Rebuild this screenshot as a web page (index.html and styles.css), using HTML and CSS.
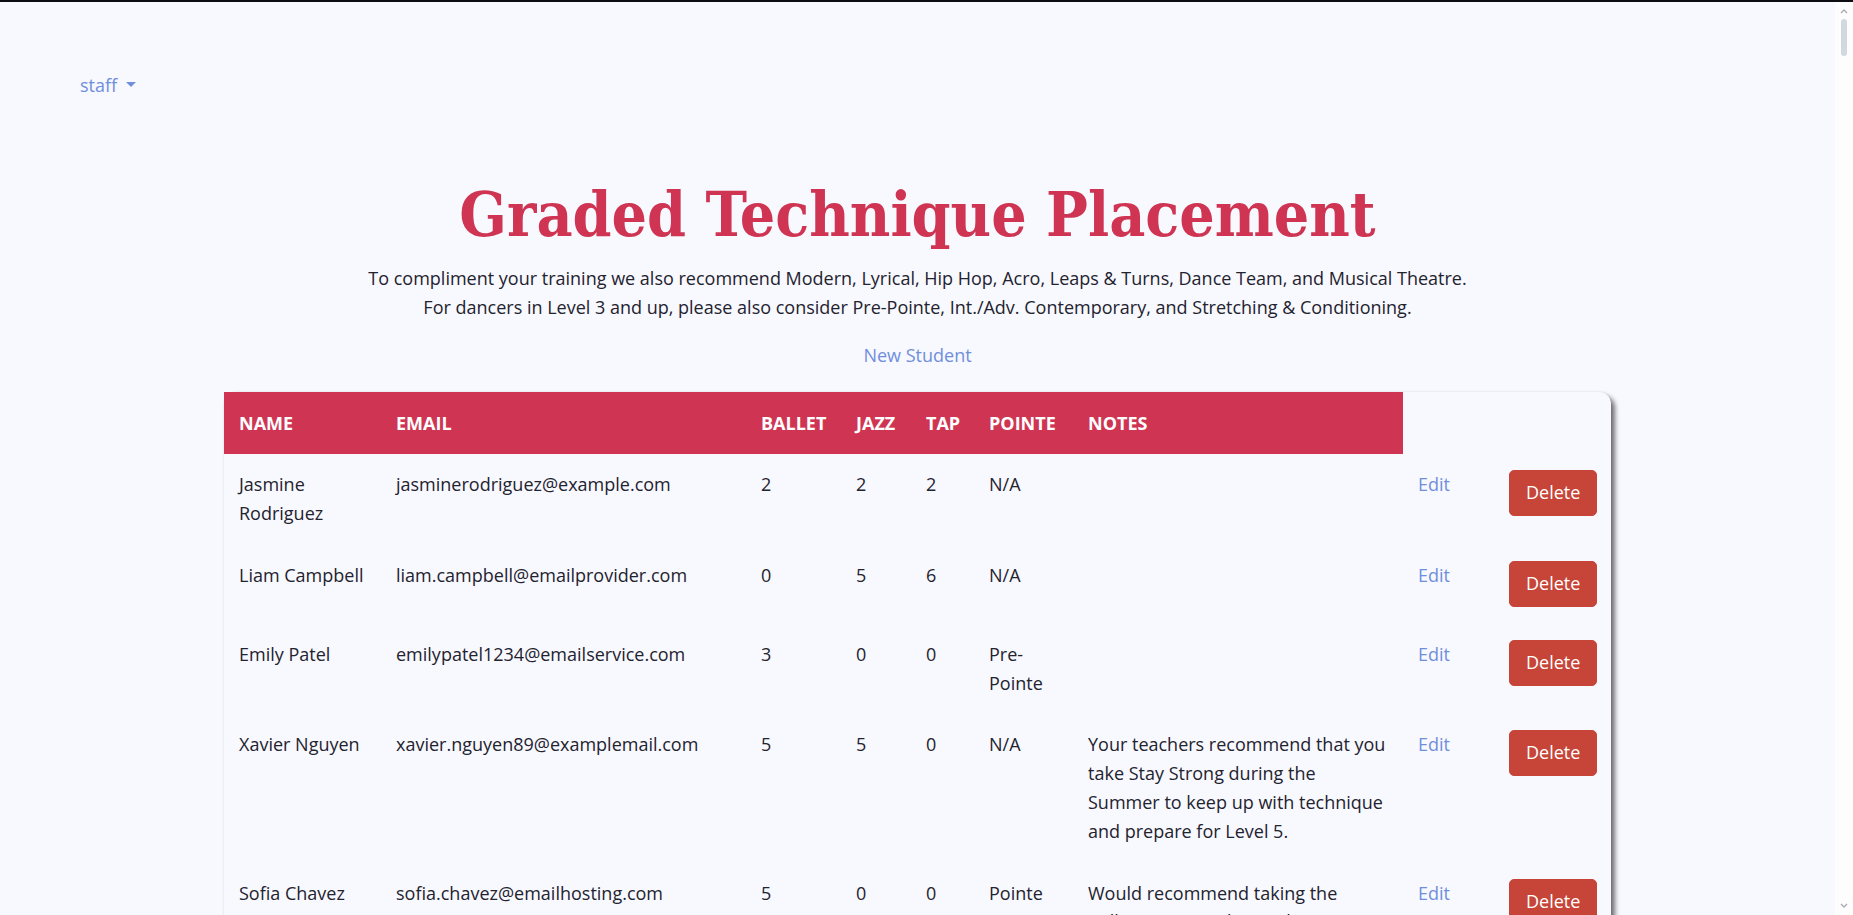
FILE: index.html
```html
<!DOCTYPE html>
<html lang="en">
<head>
<meta charset="utf-8">
<title>Graded Technique Placement</title>
<link rel="stylesheet" href="styles.css">
</head>
<body>
<div class="topline"></div>
<div class="scrollbar" aria-hidden="true">
  <svg class="arrow up" width="8" height="6" viewBox="0 0 8 6"><path d="M1 5 L4 2 L7 5" fill="none" stroke="#a9adb3" stroke-width="1.4"/></svg>
  <div class="thumb"></div>
  <svg class="arrow down" width="8" height="6" viewBox="0 0 8 6"><path d="M1 1 L4 4 L7 1" fill="none" stroke="#a9adb3" stroke-width="1.4"/></svg>
</div>
<nav class="nav">
  <a class="nav-link" href="#">staff <span class="caret"></span></a>
</nav>
<main class="main">
  <h1 class="title">Graded Technique Placement</h1>
  <p class="intro">To compliment your training we also recommend Modern, Lyrical, Hip Hop, Acro, Leaps &amp; Turns, Dance Team, and Musical Theatre.<br>For dancers in Level 3 and up, please also consider Pre-Pointe, Int./Adv. Contemporary, and Stretching &amp; Conditioning.</p>
  <p class="new"><a href="#" class="link">New Student</a></p>
  <table class="students">
    <colgroup>
      <col class="c-name"><col class="c-email"><col class="c-ballet"><col class="c-jazz"><col class="c-tap"><col class="c-pointe"><col class="c-notes"><col class="c-edit"><col class="c-del">
    </colgroup>
    <thead>
      <tr>
        <th class="h">Name</th><th class="h">Email</th><th class="h">Ballet</th><th class="h">Jazz</th><th class="h">Tap</th><th class="h">Pointe</th><th class="h">Notes</th><th class="blank"></th><th class="blank"></th>
      </tr>
    </thead>
    <tbody>
      <tr>
        <td>Jasmine Rodriguez</td><td>jasminerodriguez@example.com</td><td>2</td><td>2</td><td>2</td><td>N/A</td><td></td>
        <td><a href="#" class="link">Edit</a></td><td><button class="del">Delete</button></td>
      </tr>
      <tr>
        <td>Liam Campbell</td><td>liam.campbell@emailprovider.com</td><td>0</td><td>5</td><td>6</td><td>N/A</td><td></td>
        <td><a href="#" class="link">Edit</a></td><td><button class="del">Delete</button></td>
      </tr>
      <tr>
        <td>Emily Patel</td><td>emilypatel1234@emailservice.com</td><td>3</td><td>0</td><td>0</td><td>Pre-Pointe</td><td></td>
        <td><a href="#" class="link">Edit</a></td><td><button class="del">Delete</button></td>
      </tr>
      <tr>
        <td>Xavier Nguyen</td><td>xavier.nguyen89@examplemail.com</td><td>5</td><td>5</td><td>0</td><td>N/A</td><td>Your teachers recommend that you take Stay Strong during the Summer to keep up with technique and prepare for Level 5.</td>
        <td><a href="#" class="link">Edit</a></td><td><button class="del">Delete</button></td>
      </tr>
      <tr>
        <td>Sofia Chavez</td><td>sofia.chavez@emailhosting.com</td><td>5</td><td>0</td><td>0</td><td>Pointe</td><td>Would recommend taking the Ballet Intensive during the Summer.</td>
        <td><a href="#" class="link">Edit</a></td><td><button class="del">Delete</button></td>
      </tr>
      <tr>
        <td>Noah Kim</td><td>noah.kim@example.com</td><td>1</td><td>2</td><td>1</td><td>N/A</td><td></td>
        <td><a href="#" class="link">Edit</a></td><td><button class="del">Delete</button></td>
      </tr>
    </tbody>
  </table>
</main>
</body>
</html>
```
FILE: styles.css
```css
html, body {
  margin: 0;
  padding: 0;
}
body {
  background: #f8f8ff;
  color: #23232e;
  font-family: "Open Sans", "Liberation Sans", sans-serif;
  font-size: 18px;
  line-height: 1.6;
  padding-right: 18px;
}
.topline {
  position: fixed;
  top: 0;
  left: 0;
  right: 0;
  height: 2px;
  background: #0d0d14;
  z-index: 2;
}
.scrollbar {
  position: fixed;
  top: 0;
  right: 0;
  bottom: 0;
  width: 18px;
  background: #fdfdfe;
  z-index: 1;
}
.scrollbar .arrow {
  position: absolute;
  left: 5px;
}
.scrollbar .up { top: 8px; }
.scrollbar .down { bottom: 6px; }
.scrollbar .thumb {
  position: absolute;
  top: 19px;
  left: 6px;
  width: 6px;
  height: 37px;
  border-radius: 3px;
  background: #d2d8df;
}
.nav {
  padding: 71px 0 0 80px;
}
.nav-link {
  color: #6f8fdc;
  text-decoration: none;
}
.caret {
  display: inline-block;
  vertical-align: 0.255em;
  margin-left: 0.255em;
  border-top: 0.3em solid #6f8fdc;
  border-left: 0.28em solid transparent;
  border-right: 0.28em solid transparent;
}
.main {
  padding-bottom: 60px;
}
.title {
  margin: 78px 0 0;
  text-align: center;
  color: #cf3552;
  font-family: "DejaVu Serif", "Liberation Serif", serif;
  font-stretch: condensed;
  font-weight: bold;
  font-size: 62px;
  line-height: 1.2;
}
.intro {
  margin: 12px 0 0;
  text-align: center;
}
.new {
  margin: 19px 0 0;
  text-align: center;
}
.link {
  color: #6f8fdc;
  text-decoration: none;
}
.students {
  margin: 22px auto 0;
  width: 1387px;
  table-layout: fixed;
  border-collapse: separate;
  border-spacing: 0;
  border-radius: 12px;
  box-shadow: 4px 4px 5px rgba(0, 0, 0, 0.55), 0 0 3px rgba(0, 0, 0, 0.08);
}
.c-name { width: 157px; }
.c-email { width: 365px; }
.c-ballet { width: 95px; }
.c-jazz { width: 70px; }
.c-tap { width: 63px; }
.c-pointe { width: 99px; }
.c-notes { width: 330px; }
.c-edit { width: 91px; }
.c-del { width: 117px; }
.students th,
.students td {
  padding: 16px 15px 17px;
  text-align: left;
  vertical-align: top;
}
.students th {
  padding-top: 17px;
  padding-bottom: 17px;
}
.students th.h {
  background: #cf3552;
  color: #fff;
  font-weight: bold;
  text-transform: uppercase;
}
.del {
  display: block;
  font-family: inherit;
  font-size: 18px;
  line-height: 1.6;
  color: #fff;
  background: #c64538;
  border: 1px solid #c64538;
  border-radius: 5px;
  padding: 7px 16px 8px;
  cursor: pointer;
}
```
